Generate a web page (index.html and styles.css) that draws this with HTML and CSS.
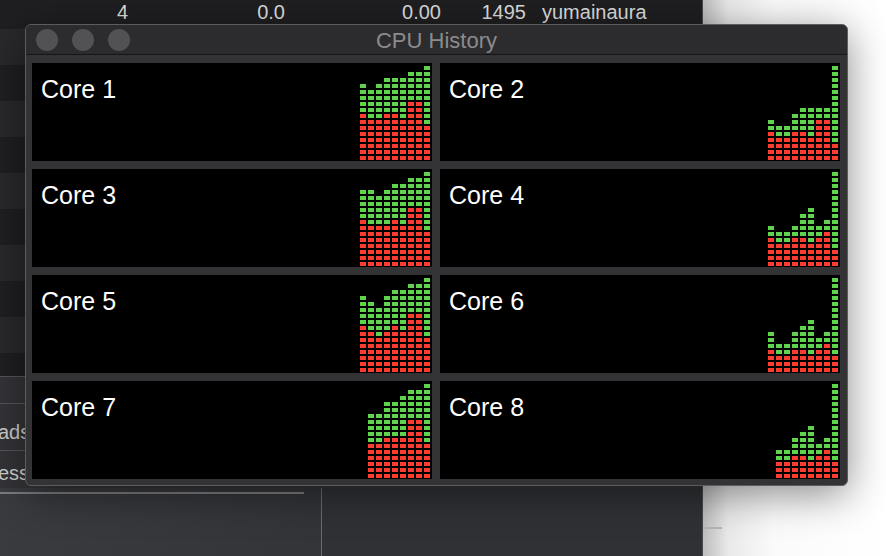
FILE: index.html
```html
<!DOCTYPE html>
<html lang="en">

<head>
    <meta charset="UTF-8">
    <meta name="viewport" content="width=device-width, initial-scale=1.0">
    <title>CPU History</title>
    <link rel="stylesheet" href="styles.css">
</head>

<body>
    <div class="screen">
        <div class="monitor">
            <div class="procRow">
                <span class="cell c1">4</span>
                <span class="cell c2">0.0</span>
                <span class="cell c3">0.00</span>
                <span class="cell c4">1495</span>
                <span class="cell c5">yumainaura</span>
            </div>
            <div class="procList"></div>
            <div class="info">
                <div class="infoRow first"></div>
                <div class="infoRow mid"><span class="infoLabel">ads</span></div>
                <div class="infoRow last"><span class="infoLabel">ess</span></div>
            </div>
            <div class="bottomArea">
                <div class="bottomLeft"><div class="splitLine"></div></div>
                <div class="bottomRight"></div>
            </div>
        </div>
        <div class="desk">
            <div class="deskTick"></div>
        </div>

        <div class="cpuWindow">
            <div class="titleBar">
                <div class="lights">
                    <span class="light"></span>
                    <span class="light"></span>
                    <span class="light"></span>
                </div>
                <div class="title">CPU History</div>
                <div></div>
            </div>
            <div class="cores">
                <div class="core">
                    <div class="coreName">Core 1</div>
                    <div class="graph">
                        <div class="bar" style="--u:5;--s:8"><i class="user"></i><i class="sys"></i></div>
                        <div class="bar" style="--u:5;--s:7"><i class="user"></i><i class="sys"></i></div>
                        <div class="bar" style="--u:6;--s:7"><i class="user"></i><i class="sys"></i></div>
                        <div class="bar" style="--u:6;--s:8"><i class="user"></i><i class="sys"></i></div>
                        <div class="bar" style="--u:6;--s:8"><i class="user"></i><i class="sys"></i></div>
                        <div class="bar" style="--u:7;--s:7"><i class="user"></i><i class="sys"></i></div>
                        <div class="bar" style="--u:5;--s:10"><i class="user"></i><i class="sys"></i></div>
                        <div class="bar" style="--u:5;--s:10"><i class="user"></i><i class="sys"></i></div>
                        <div class="bar" style="--u:10;--s:6"><i class="user"></i><i class="sys"></i></div>
                    </div>
                </div>
                <div class="core">
                    <div class="coreName">Core 2</div>
                    <div class="graph">
                        <div class="bar" style="--u:2;--s:5"><i class="user"></i><i class="sys"></i></div>
                        <div class="bar" style="--u:2;--s:4"><i class="user"></i><i class="sys"></i></div>
                        <div class="bar" style="--u:2;--s:4"><i class="user"></i><i class="sys"></i></div>
                        <div class="bar" style="--u:3;--s:5"><i class="user"></i><i class="sys"></i></div>
                        <div class="bar" style="--u:4;--s:5"><i class="user"></i><i class="sys"></i></div>
                        <div class="bar" style="--u:5;--s:4"><i class="user"></i><i class="sys"></i></div>
                        <div class="bar" style="--u:2;--s:7"><i class="user"></i><i class="sys"></i></div>
                        <div class="bar" style="--u:2;--s:7"><i class="user"></i><i class="sys"></i></div>
                        <div class="bar" style="--u:13;--s:3"><i class="user"></i><i class="sys"></i></div>
                    </div>
                </div>
                <div class="core">
                    <div class="coreName">Core 3</div>
                    <div class="graph">
                        <div class="bar" style="--u:5;--s:8"><i class="user"></i><i class="sys"></i></div>
                        <div class="bar" style="--u:6;--s:7"><i class="user"></i><i class="sys"></i></div>
                        <div class="bar" style="--u:5;--s:7"><i class="user"></i><i class="sys"></i></div>
                        <div class="bar" style="--u:6;--s:7"><i class="user"></i><i class="sys"></i></div>
                        <div class="bar" style="--u:6;--s:8"><i class="user"></i><i class="sys"></i></div>
                        <div class="bar" style="--u:7;--s:7"><i class="user"></i><i class="sys"></i></div>
                        <div class="bar" style="--u:5;--s:10"><i class="user"></i><i class="sys"></i></div>
                        <div class="bar" style="--u:5;--s:10"><i class="user"></i><i class="sys"></i></div>
                        <div class="bar" style="--u:10;--s:6"><i class="user"></i><i class="sys"></i></div>
                    </div>
                </div>
                <div class="core">
                    <div class="coreName">Core 4</div>
                    <div class="graph">
                        <div class="bar" style="--u:2;--s:5"><i class="user"></i><i class="sys"></i></div>
                        <div class="bar" style="--u:2;--s:4"><i class="user"></i><i class="sys"></i></div>
                        <div class="bar" style="--u:2;--s:4"><i class="user"></i><i class="sys"></i></div>
                        <div class="bar" style="--u:2;--s:5"><i class="user"></i><i class="sys"></i></div>
                        <div class="bar" style="--u:4;--s:5"><i class="user"></i><i class="sys"></i></div>
                        <div class="bar" style="--u:6;--s:4"><i class="user"></i><i class="sys"></i></div>
                        <div class="bar" style="--u:2;--s:5"><i class="user"></i><i class="sys"></i></div>
                        <div class="bar" style="--u:2;--s:6"><i class="user"></i><i class="sys"></i></div>
                        <div class="bar" style="--u:13;--s:3"><i class="user"></i><i class="sys"></i></div>
                    </div>
                </div>
                <div class="core">
                    <div class="coreName">Core 5</div>
                    <div class="graph">
                        <div class="bar" style="--u:5;--s:8"><i class="user"></i><i class="sys"></i></div>
                        <div class="bar" style="--u:5;--s:7"><i class="user"></i><i class="sys"></i></div>
                        <div class="bar" style="--u:5;--s:6"><i class="user"></i><i class="sys"></i></div>
                        <div class="bar" style="--u:6;--s:7"><i class="user"></i><i class="sys"></i></div>
                        <div class="bar" style="--u:6;--s:8"><i class="user"></i><i class="sys"></i></div>
                        <div class="bar" style="--u:7;--s:7"><i class="user"></i><i class="sys"></i></div>
                        <div class="bar" style="--u:5;--s:10"><i class="user"></i><i class="sys"></i></div>
                        <div class="bar" style="--u:5;--s:10"><i class="user"></i><i class="sys"></i></div>
                        <div class="bar" style="--u:10;--s:6"><i class="user"></i><i class="sys"></i></div>
                    </div>
                </div>
                <div class="core">
                    <div class="coreName">Core 6</div>
                    <div class="graph">
                        <div class="bar" style="--u:3;--s:4"><i class="user"></i><i class="sys"></i></div>
                        <div class="bar" style="--u:2;--s:3"><i class="user"></i><i class="sys"></i></div>
                        <div class="bar" style="--u:2;--s:3"><i class="user"></i><i class="sys"></i></div>
                        <div class="bar" style="--u:3;--s:4"><i class="user"></i><i class="sys"></i></div>
                        <div class="bar" style="--u:4;--s:4"><i class="user"></i><i class="sys"></i></div>
                        <div class="bar" style="--u:6;--s:3"><i class="user"></i><i class="sys"></i></div>
                        <div class="bar" style="--u:2;--s:4"><i class="user"></i><i class="sys"></i></div>
                        <div class="bar" style="--u:2;--s:5"><i class="user"></i><i class="sys"></i></div>
                        <div class="bar" style="--u:13;--s:3"><i class="user"></i><i class="sys"></i></div>
                    </div>
                </div>
                <div class="core">
                    <div class="coreName">Core 7</div>
                    <div class="graph">
                        <div class="bar" style="--u:5;--s:6"><i class="user"></i><i class="sys"></i></div>
                        <div class="bar" style="--u:5;--s:6"><i class="user"></i><i class="sys"></i></div>
                        <div class="bar" style="--u:6;--s:7"><i class="user"></i><i class="sys"></i></div>
                        <div class="bar" style="--u:6;--s:7"><i class="user"></i><i class="sys"></i></div>
                        <div class="bar" style="--u:7;--s:7"><i class="user"></i><i class="sys"></i></div>
                        <div class="bar" style="--u:5;--s:10"><i class="user"></i><i class="sys"></i></div>
                        <div class="bar" style="--u:5;--s:10"><i class="user"></i><i class="sys"></i></div>
                        <div class="bar" style="--u:10;--s:6"><i class="user"></i><i class="sys"></i></div>
                    </div>
                </div>
                <div class="core">
                    <div class="coreName">Core 8</div>
                    <div class="graph">
                        <div class="bar" style="--u:2;--s:3"><i class="user"></i><i class="sys"></i></div>
                        <div class="bar" style="--u:2;--s:3"><i class="user"></i><i class="sys"></i></div>
                        <div class="bar" style="--u:3;--s:4"><i class="user"></i><i class="sys"></i></div>
                        <div class="bar" style="--u:4;--s:4"><i class="user"></i><i class="sys"></i></div>
                        <div class="bar" style="--u:6;--s:3"><i class="user"></i><i class="sys"></i></div>
                        <div class="bar" style="--u:2;--s:4"><i class="user"></i><i class="sys"></i></div>
                        <div class="bar" style="--u:2;--s:5"><i class="user"></i><i class="sys"></i></div>
                        <div class="bar" style="--u:13;--s:3"><i class="user"></i><i class="sys"></i></div>
                    </div>
                </div>
            </div>
        </div>
    </div>
</body>

</html>
```

FILE: styles.css
```css
* {
    box-sizing: border-box;
}

body {
    margin: 0;
    width: 886px;
    height: 556px;
    overflow: hidden;
    background: #ffffff;
    font-family: "Liberation Sans", Arial, sans-serif;
}

.screen {
    position: relative;
    display: flex;
    height: 556px;
}

/* activity monitor window behind */
.monitor {
    width: 703px;
    height: 556px;
    display: flex;
    flex-direction: column;
    background: #1f1f21;
    border-right: 1px solid #4a4a4c;
}

.procRow {
    height: 29px;
    display: flex;
    color: #dedede;
    font-size: 20px;
    line-height: 23px;
    padding-top: 1px;
}

.cell {
    text-align: right;
}

.c1 { width: 128px; }
.c2 { width: 157px; }
.c3 { width: 156px; }
.c4 { width: 85px; }
.c5 { padding-left: 16px; text-align: left; }

.procList {
    height: 347px;
    background: repeating-linear-gradient(#29292b 0 36px, #1f1f21 36px 72px);
}

.info {
    height: 112px;
    background: #343438;
    color: #cfcfcf;
    font-size: 20px;
}

.infoRow {
    border-top: 1px solid #55565a;
    white-space: nowrap;
}

.infoRow.first { height: 27px; }
.infoRow.mid { height: 47px; padding-top: 17px; }
.infoRow.last { height: 38px; padding-top: 11px; }

.infoLabel {
    display: inline-block;
    margin-left: -2px;
}

.bottomArea {
    flex: 1;
    display: flex;
    background: #303135;
}

.bottomLeft {
    width: 322px;
    padding-top: 4px;
    background: linear-gradient(to right, #3a3b3f, #333438);
    border-right: 1px solid #6c6c70;
}

.splitLine {
    width: 304px;
    height: 2px;
    background: #7d7d80;
}

.bottomRight {
    flex: 1;
}

.desk {
    flex: 1;
    background: linear-gradient(to right, #bdbdbd, #e9e9e9 25px, #fafafa 70px, #ffffff);
    padding-top: 527px;
}

.deskTick {
    width: 19px;
    height: 2px;
    background: #b4b4b4;
}

/* CPU History window */
.cpuWindow {
    position: absolute;
    left: 25px;
    top: 24px;
    width: 823px;
    height: 462px;
    background: #333335;
    border: 1px solid #5c5c5e;
    border-radius: 6px;
    box-shadow: 0 8px 40px rgba(0, 0, 0, 0.45);
    overflow: hidden;
}

.titleBar {
    height: 30px;
    display: grid;
    grid-template-columns: 1fr auto 1fr;
    align-items: center;
    background: #2c2c2e;
    border-bottom: 1px solid #161618;
}

.lights {
    display: flex;
    gap: 14px;
    padding-left: 10px;
}

.light {
    width: 22px;
    height: 22px;
    border-radius: 50%;
    background: #525254;
}

.title {
    color: #8b8b8d;
    font-size: 22px;
    padding-top: 2px;
}

.cores {
    display: grid;
    grid-template-columns: 400px 400px;
    grid-template-rows: repeat(4, 98px);
    gap: 8px;
    padding: 8px 7px 6px 6px;
}

.core {
    display: flex;
    justify-content: space-between;
    background: #000000;
    padding: 0 2px 1px 9px;
}

.coreName {
    color: #ffffff;
    font-size: 25px;
    margin-top: 12px;
}

.graph {
    align-self: flex-end;
    display: flex;
    align-items: flex-end;
    gap: 2px;
}

.bar {
    width: 6px;
    display: flex;
    flex-direction: column;
}

.bar i {
    display: block;
}

.bar .user {
    height: calc(var(--u) * 6px);
    background: repeating-linear-gradient(to top, #5fd34b 0 4px, transparent 4px 6px);
}

.bar .sys {
    height: calc(var(--s) * 6px);
    background: repeating-linear-gradient(to top, #fe3b2f 0 4px, transparent 4px 6px);
}
```
